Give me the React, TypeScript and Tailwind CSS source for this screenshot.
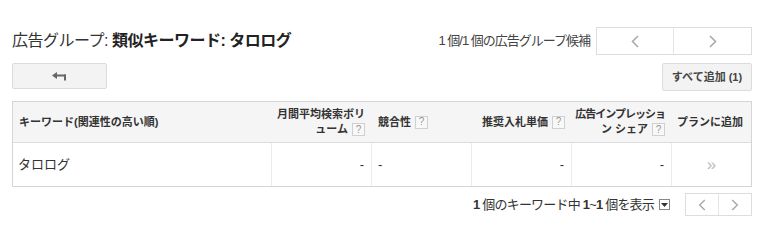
import React from "react";

const font = { fontFamily: '"Liberation Sans", "Noto Sans CJK JP", sans-serif' };

function Q() {
  return (
    <span className="ml-[4px] inline-flex h-[13px] w-[13px] items-center justify-center border border-[#d0d0d0] bg-[#f8f8f8] text-[10px] font-normal leading-none tracking-normal text-[#999]">
      ?
    </span>
  );
}

function ChevL({ h = 13 }: { h?: number }) {
  return (
    <svg width="8" height={h} viewBox="0 0 8 13" fill="none">
      <polyline points="7,1 1.5,6.5 7,12" stroke="#aaa" strokeWidth="1.6" />
    </svg>
  );
}
function ChevR({ h = 13 }: { h?: number }) {
  return (
    <svg width="8" height={h} viewBox="0 0 8 13" fill="none">
      <polyline points="1,1 6.5,6.5 1,12" stroke="#aaa" strokeWidth="1.6" />
    </svg>
  );
}

export default function App() {
  return (
    <div className="h-[229px] w-[763px] bg-white pl-[12px] pr-[11px] pt-[27px] text-[#333]" style={font}>
      {/* top row */}
      <div className="flex h-[28px] items-center justify-between">
        <div className="text-[16px] leading-none tracking-[-0.5px] text-[#333]">
          広告グループ: <span className="font-bold text-[#222]">類似キーワード: タロログ</span>
        </div>
        <div className="flex items-center">
          <span className="mr-[6px] text-[13px] tracking-[-1px] text-[#444]">1 個/1 個の広告グループ候補</span>
          <div className="flex h-[28px] w-[156px] border border-[#ddd] bg-white">
            <div className="flex w-[77px] items-center justify-center border-r border-[#e5e5e5]">
              <ChevL />
            </div>
            <div className="flex flex-1 items-center justify-center">
              <ChevR />
            </div>
          </div>
        </div>
      </div>

      {/* second row */}
      <div className="mt-[8px] flex items-start justify-between">
        <button className="flex h-[26px] w-[95px] items-center justify-center rounded-[2px] border border-[#dcdcdc] bg-[#f3f3f3]">
          <svg width="15" height="9" viewBox="0 0 15 9" fill="#666">
            <polygon points="0,3.5 5,0 5,7" />
            <rect x="4" y="2.5" width="10" height="2" />
            <rect x="12" y="2.5" width="2" height="6" />
          </svg>
        </button>
        <button className="flex h-[28px] w-[90px] items-center justify-center rounded-[2px] border border-[#dcdcdc] bg-[#f3f3f3] text-[11px] font-bold text-[#444]">
          すべて追加 (1)
        </button>
      </div>

      {/* table */}
      <div className="mt-[10px] border border-[#d5d5d5]">
        <div className="grid h-[41px] grid-cols-[258px_100px_100px_100px_100px_1fr] border-b border-[#ddd] bg-[#f5f5f5] text-[11px] font-bold leading-[15px] text-[#333]">
          <div className="flex items-center pl-[6px]">キーワード(関連性の高い順)</div>
          <div className="flex flex-col items-end justify-center pr-[6px]">
            <span className="whitespace-nowrap">月間平均検索ボリ</span>
            <span className="flex items-center whitespace-nowrap">
              ューム
              <Q />
            </span>
          </div>
          <div className="flex items-center pl-[7px]">
            競合性
            <Q />
          </div>
          <div className="flex items-center justify-end pr-[6px]">
            推奨入札単価
            <Q />
          </div>
          <div className="flex flex-col items-end justify-center pr-[6px]">
            <span className="whitespace-nowrap tracking-[-1px]">広告インプレッショ</span>
            <span className="flex items-center whitespace-nowrap">
              ン シェア
              <Q />
            </span>
          </div>
          <div className="flex items-center justify-center pr-[2px]">プランに追加</div>
        </div>
        <div className="grid h-[43px] grid-cols-[258px_100px_100px_100px_100px_1fr] text-[13px] text-[#333]">
          <div className="flex items-center pl-[5px]">タロログ</div>
          <div className="flex items-center justify-end border-l border-[#ececec] pr-[7px]">-</div>
          <div className="flex items-center border-l border-[#ececec] pl-[6px]">-</div>
          <div className="flex items-center justify-end border-l border-[#ececec] pr-[7px]">-</div>
          <div className="flex items-center justify-end border-l border-[#ececec] pr-[7px]">-</div>
          <div className="flex items-center justify-center border-l border-[#ececec] text-[17px] text-[#bbb]">»</div>
        </div>
      </div>

      {/* bottom row */}
      <div className="mt-[6px] flex items-center justify-end">
        <span className="text-[13px] tracking-[-0.8px] text-[#333]">
          <b>1</b> 個のキーワード中 <b>1</b>~<b>1</b> 個を表示
        </span>
        <span className="ml-[5px] flex h-[11px] w-[11px] items-center justify-center border border-[#888] bg-white">
          <svg width="7" height="4" viewBox="0 0 7 4">
            <polygon points="0,0 7,0 3.5,4" fill="#333" />
          </svg>
        </span>
        <div className="ml-[15px] flex h-[23px] w-[67px] border border-[#ddd] bg-white">
          <div className="flex w-[33px] items-center justify-center border-r border-[#e5e5e5]">
            <ChevL h={12} />
          </div>
          <div className="flex flex-1 items-center justify-center">
            <ChevR h={12} />
          </div>
        </div>
      </div>
    </div>
  );
}
